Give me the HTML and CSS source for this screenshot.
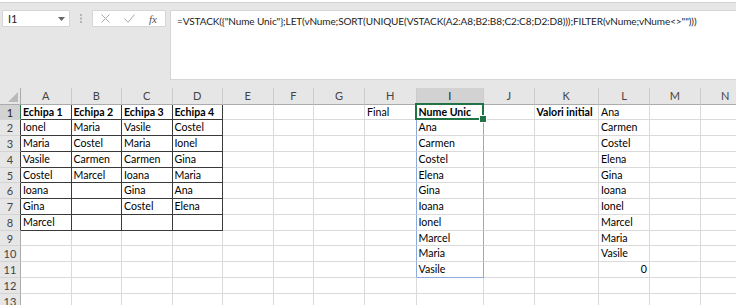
FILE: index.html
```html
<!DOCTYPE html>
<html lang="ro">
<head>
    <meta charset="UTF-8">
    <title>VSTACK</title>
    <link rel="stylesheet" href="styles.css">
</head>
<body>
    <div class="titlebar"></div>

    <div class="formula-bar">
        <div class="name-box">
            <span>I1</span>
            <svg width="7" height="4" viewBox="0 0 7 4"><path d="M0 0h7L3.5 4z" fill="#666"/></svg>
        </div>
        <div class="dots">
            <svg width="2" height="9" viewBox="0 0 2 9"><rect y="0" width="2" height="2" fill="#b4b4b4"/><rect y="3.5" width="2" height="2" fill="#b4b4b4"/><rect y="7" width="2" height="2" fill="#b4b4b4"/></svg>
        </div>
        <div class="btn-box">
            <span class="icon">
                <svg width="9" height="9" viewBox="0 0 9 9"><path d="M0.5 0.5l8 8M8.5 0.5l-8 8" stroke="#a8a8a8" stroke-width="1"/></svg>
            </span>
            <span class="icon">
                <svg width="11" height="9" viewBox="0 0 11 9"><path d="M0.5 4.5l3.5 3.8L10.5 0.5" stroke="#a8a8a8" stroke-width="1" fill="none"/></svg>
            </span>
            <span class="icon fx">fx</span>
        </div>
        <div class="formula-input">=VSTACK({"Nume Unic"};LET(vNume;SORT(UNIQUE(VSTACK(A2:A8;B2:B8;C2:C8;D2:D8)));FILTER(vNume;vNume&lt;&gt;"")))</div>
    </div>

    <div class="sheet">
        <!-- antet coloane -->
        <div class="corner"><svg width="10" height="10" viewBox="0 0 10 10"><path d="M10 0V10H0z" fill="#b9b9b9"/></svg></div>
        <div class="ch">A</div><div class="ch">B</div><div class="ch">C</div><div class="ch">D</div><div class="ch">E</div><div class="ch">F</div><div class="ch">G</div><div class="ch">H</div><div class="ch sel">I</div><div class="ch">J</div><div class="ch">K</div><div class="ch">L</div><div class="ch">M</div><div class="ch">N</div>

        <!-- 1 -->
        <div class="rh sel">1</div>
        <div class="t b">Echipa 1</div><div class="t b">Echipa 2</div><div class="t b">Echipa 3</div><div class="t b">Echipa 4</div>
        <div></div><div></div><div></div><div>Final</div><div class="cur b">Nume Unic</div><div></div><div class="b">Valori initial</div><div>Ana</div><div></div><div></div>

        <!-- 2 -->
        <div class="rh tl">2</div>
        <div class="t">Ionel</div><div class="t">Maria</div><div class="t">Vasile</div><div class="t">Costel</div>
        <div></div><div></div><div></div><div class="bl"></div><div class="bl">Ana</div><div></div><div></div><div>Carmen</div><div></div><div></div>

        <!-- 3 -->
        <div class="rh tl">3</div>
        <div class="t">Maria</div><div class="t">Costel</div><div class="t">Maria</div><div class="t">Ionel</div>
        <div></div><div></div><div></div><div class="bl"></div><div class="bl">Carmen</div><div></div><div></div><div>Costel</div><div></div><div></div>

        <!-- 4 -->
        <div class="rh tl">4</div>
        <div class="t">Vasile</div><div class="t">Carmen</div><div class="t">Carmen</div><div class="t">Gina</div>
        <div></div><div></div><div></div><div class="bl"></div><div class="bl">Costel</div><div></div><div></div><div>Elena</div><div></div><div></div>

        <!-- 5 -->
        <div class="rh tl">5</div>
        <div class="t">Costel</div><div class="t">Marcel</div><div class="t">Ioana</div><div class="t">Maria</div>
        <div></div><div></div><div></div><div class="bl"></div><div class="bl">Elena</div><div></div><div></div><div>Gina</div><div></div><div></div>

        <!-- 6 -->
        <div class="rh tl">6</div>
        <div class="t">Ioana</div><div class="t"></div><div class="t">Gina</div><div class="t">Ana</div>
        <div></div><div></div><div></div><div class="bl"></div><div class="bl">Gina</div><div></div><div></div><div>Ioana</div><div></div><div></div>

        <!-- 7 -->
        <div class="rh tl">7</div>
        <div class="t">Gina</div><div class="t"></div><div class="t">Costel</div><div class="t">Elena</div>
        <div></div><div></div><div></div><div class="bl"></div><div class="bl">Ioana</div><div></div><div></div><div>Ionel</div><div></div><div></div>

        <!-- 8 -->
        <div class="rh tl">8</div>
        <div class="t">Marcel</div><div class="t"></div><div class="t"></div><div class="t"></div>
        <div></div><div></div><div></div><div class="bl"></div><div class="bl">Ionel</div><div></div><div></div><div>Marcel</div><div></div><div></div>

        <!-- 9 -->
        <div class="rh">9</div>
        <div></div><div></div><div></div><div></div>
        <div></div><div></div><div></div><div class="bl"></div><div class="bl">Marcel</div><div></div><div></div><div>Maria</div><div></div><div></div>

        <!-- 10 -->
        <div class="rh">10</div>
        <div></div><div></div><div></div><div></div>
        <div></div><div></div><div></div><div class="bl"></div><div class="bl">Maria</div><div></div><div></div><div>Vasile</div><div></div><div></div>

        <!-- 11 -->
        <div class="rh">11</div>
        <div></div><div></div><div></div><div></div>
        <div></div><div></div><div></div><div class="bl"></div><div class="bl bb">Vasile</div><div></div><div></div><div class="num">0</div><div></div><div></div>

        <!-- 12 -->
        <div class="rh">12</div>
        <div></div><div></div><div></div><div></div><div></div><div></div><div></div><div></div><div></div><div></div><div></div><div></div><div></div><div></div>

        <!-- 13 -->
        <div class="rh">13</div>
        <div></div><div></div><div></div><div></div><div></div><div></div><div></div><div></div><div></div><div></div><div></div><div></div><div></div><div></div>
    </div>
</body>
</html>
```

FILE: styles.css
```css
* {
    margin: 0;
    padding: 0;
    box-sizing: border-box;
}

body {
    width: 736px;
    height: 305px;
    overflow: hidden;
    background: #e6e6e6;
    font-family: Lato, 'Liberation Sans', sans-serif;
    font-size: 10.6px;
    color: #000;
}

.titlebar {
    height: 3px;
    background: #fff;
    border-bottom: 1px solid #d2d2d2;
}

/* bara de formule */
.formula-bar {
    display: flex;
    align-items: flex-start;
    height: 85px;
    padding-top: 7px;
}

.name-box {
    width: 68px;
    height: 17px;
    margin-left: 2px;
    background: #fff;
    border: 1px solid #d6d6d6;
    display: flex;
    justify-content: space-between;
    align-items: center;
    padding: 0 4px 0 5px;
    font-size: 11px;
    color: #222;
}

.dots {
    width: 22px;
    height: 17px;
    display: flex;
    justify-content: center;
    align-items: center;
}

.btn-box {
    width: 74px;
    height: 17px;
    background: #fff;
    border: 1px solid #d6d6d6;
    display: grid;
    grid-template-columns: repeat(3, 24px);
    align-items: center;
}

.icon {
    display: flex;
    justify-content: center;
    align-items: center;
}

.fx {
    font-family: 'Liberation Serif', serif;
    font-style: italic;
    font-size: 11px;
    color: #555;
}

.formula-input {
    flex: 1;
    height: 70px;
    margin-left: 4px;
    background: #fff;
    border: 1px solid #d6d6d6;
    border-right: none;
    padding: 3px 6px;
    font-size: 10px;
    letter-spacing: -0.1px;
    line-height: 14px;
    color: #222;
    white-space: nowrap;
    overflow: hidden;
}

/* foaia */
.sheet {
    display: grid;
    grid-template-columns: 21px 50.5px 50.5px 50.5px 50.5px 50.5px 40.5px 51px 51.5px 67.5px 50.5px 64.5px 51px 50.5px 50.5px;
    grid-template-rows: 16.5px;
    grid-auto-rows: 15.75px;
    width: max-content;
    background: #fff;
}

.sheet > div {
    border-right: 1px solid #dadada;
    border-bottom: 1px solid #dadada;
    padding: 0 2px;
    line-height: 15px;
    white-space: nowrap;
}

.sheet > .ch {
    background: #e6e6e6;
    border-right-color: #cbcbcb;
    border-bottom-color: #ababab;
    text-align: center;
    color: #444;
    font-size: 11px;
    line-height: 16px;
}

.sheet > .corner {
    background: #e6e6e6;
    border-right-color: #ababab;
    border-bottom-color: #ababab;
    display: flex;
    justify-content: flex-end;
    align-items: flex-end;
    padding: 0 2px 2px 0;
}

.sheet > .rh {
    background: #e6e6e6;
    border-right-color: #ababab;
    border-bottom-color: #d4d4d4;
    text-align: center;
    color: #444;
    font-size: 11px;
    padding: 0;
}

.sheet > .ch.sel {
    background: #d2d2d2;
    border-bottom-color: #217346;
    color: #222;
}

.sheet > .rh.sel {
    background: #d2d2d2;
    border-right-color: #217346;
    color: #222;
}

.sheet > .rh.tl {
    border-right-color: #3a3a3a;
}

.sheet > .t {
    border-right-color: #3a3a3a;
    border-bottom-color: #3a3a3a;
}

.sheet > .bl {
    border-right-color: #8eaadb;
}

.sheet > .bb {
    border-bottom-color: #8eaadb;
}

.b {
    font-weight: bold;
}

.num {
    text-align: right;
}

/* celula activa */
.cur {
    position: relative;
}

.cur::before {
    content: '';
    position: absolute;
    left: -2px;
    top: -2px;
    right: -1px;
    bottom: -1px;
    border: 2px solid #217346;
}

.cur::after {
    content: '';
    position: absolute;
    right: -4px;
    bottom: -4px;
    width: 6px;
    height: 6px;
    background: #217346;
    border: 1px solid #fff;
}
```
